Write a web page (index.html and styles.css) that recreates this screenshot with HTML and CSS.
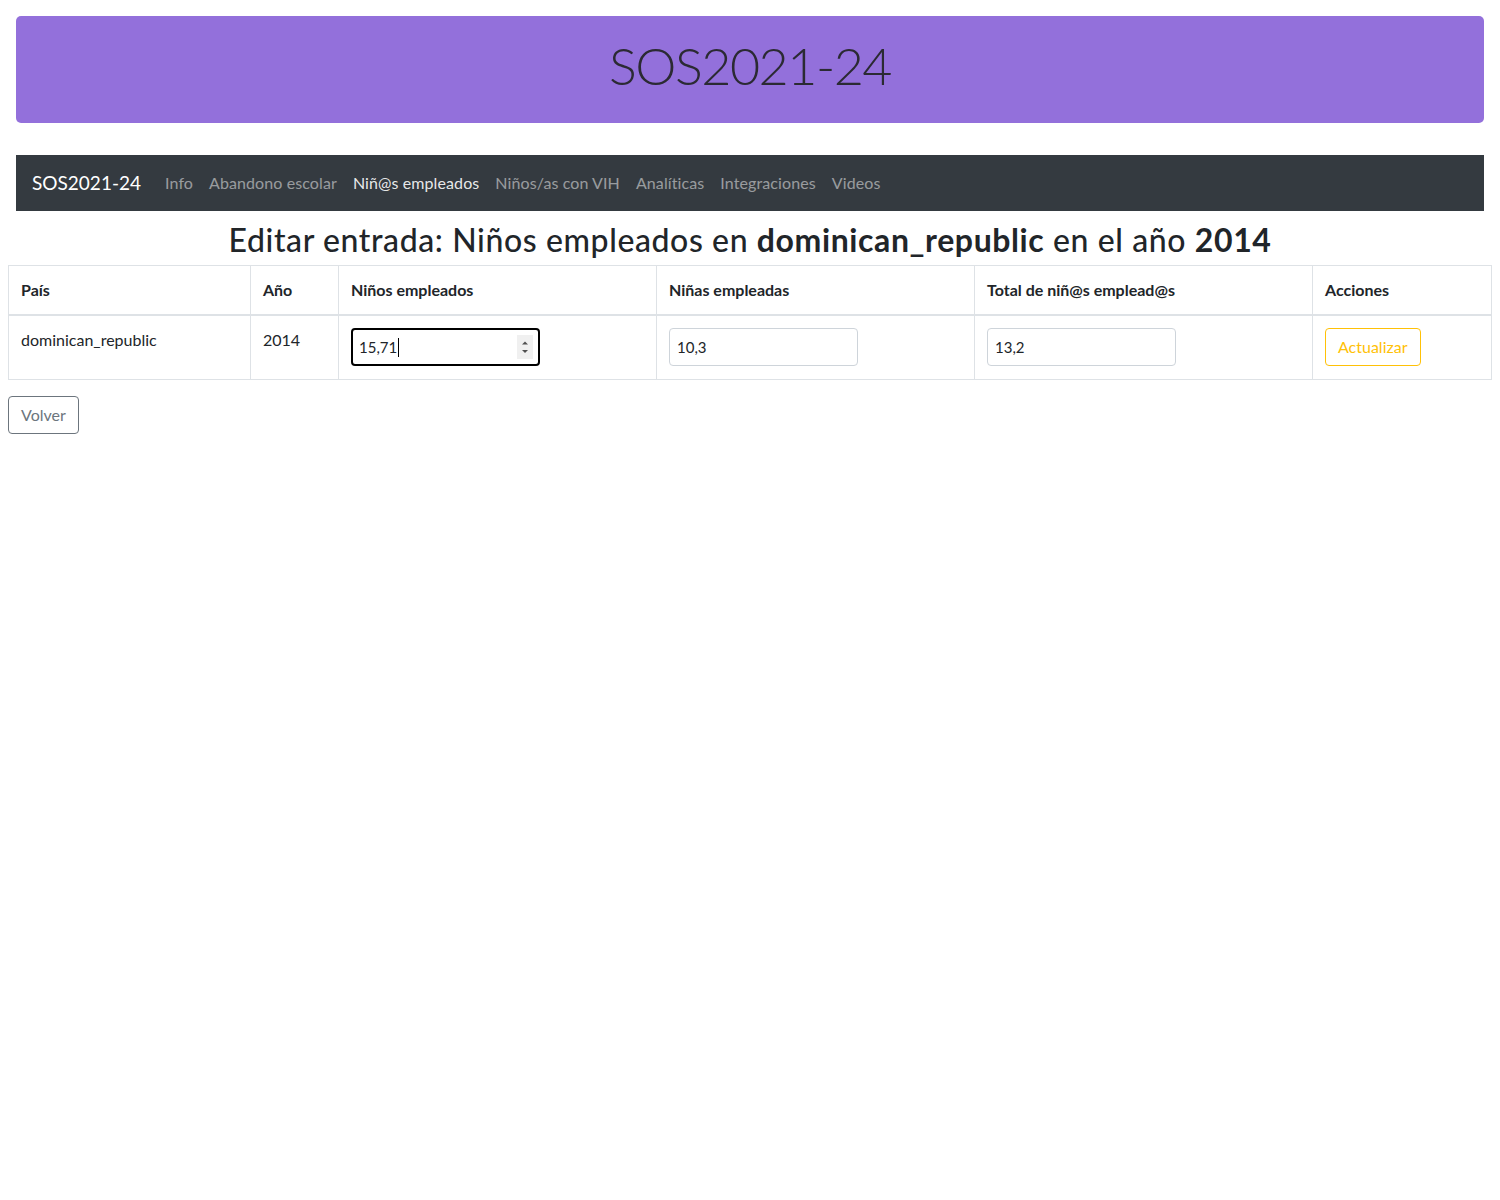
FILE: index.html
```html
<!DOCTYPE html>
<html lang="es">
<head>
<meta charset="utf-8">
<title>SOS2021-24</title>
<link rel="stylesheet" href="styles.css">
</head>
<body>
<header class="jumbotron"><h1 class="display">SOS2021-24</h1></header>
<nav class="navbar">
  <span class="brand">SOS2021-24</span>
  <a class="nav-link">Info</a>
  <a class="nav-link">Abandono escolar</a>
  <a class="nav-link active">Niñ@s empleados</a>
  <a class="nav-link">Niños/as con VIH</a>
  <a class="nav-link">Analíticas</a>
  <a class="nav-link">Integraciones</a>
  <a class="nav-link">Videos</a>
</nav>
<h2 class="title">Editar entrada: Niños empleados en <strong>dominican_republic</strong> en el año <strong>2014</strong></h2>
<table class="table">
  <thead>
    <tr>
      <th class="c1">País</th>
      <th class="c2">Año</th>
      <th class="c3">Niños empleados</th>
      <th class="c4">Niñas empleadas</th>
      <th class="c5">Total de niñ@s emplead@s</th>
      <th class="c6">Acciones</th>
    </tr>
  </thead>
  <tbody>
    <tr>
      <td>dominican_republic</td>
      <td>2014</td>
      <td><div class="form-control focused"><span>15,71</span><span class="caret"></span><span class="spin"><svg width="16" height="24" viewBox="0 0 16 24"><path d="M8 6.5 L11 9.5 L5 9.5 Z" fill="#505050"/><path d="M8 18 L11 15 L5 15 Z" fill="#505050"/></svg></span></div></td>
      <td><div class="form-control">10,3</div></td>
      <td><div class="form-control">13,2</div></td>
      <td><button class="btn btn-warning-outline">Actualizar</button></td>
    </tr>
  </tbody>
</table>
<button class="btn btn-secondary-outline">Volver</button>
</body>
</html>
```
FILE: styles.css
```css
body {
  margin: 8px;
  font-family: "Lato", "Noto Sans", sans-serif;
  font-size: 16px;
  line-height: 1.5;
  color: #212529;
  background: #fff;
}
.jumbotron {
  margin: 8px 8px 32px;
  height: 107px;
  background: #9370db;
  border-radius: 5px;
  display: flex;
  align-items: center;
  justify-content: center;
}
.display {
  margin: -8px 0 0;
  font-size: 52px;
  font-weight: 300;
  line-height: 1.2;
  color: #2b2a33;
  letter-spacing: -1.5px;
}
.navbar {
  margin: 0 8px;
  height: 56px;
  background: #343a40;
  display: flex;
  align-items: center;
  padding: 0 16px;
  box-sizing: border-box;
}
.brand {
  color: #fff;
  font-size: 19px;
  margin-right: 16px;
}
.nav-link {
  color: rgba(255,255,255,.5);
  padding: 0 8px;
  font-size: 16px;
  letter-spacing: 0.1px;
}
.nav-link.active { color: rgba(255,255,255,.9); }
.title {
  margin: 10px 0 6px;
  text-align: center;
  font-size: 32px;
  font-weight: 500;
  line-height: 1.2;
  letter-spacing: 0.6px;
}
.title strong { font-weight: 700; }
.table {
  width: 100%;
  border-collapse: collapse;
  margin-bottom: 16px;
}
.table th, .table td {
  border: 1px solid #dee2e6;
  padding: 12px;
  text-align: left;
  vertical-align: top;
}
.table td { padding-bottom: 13px; }
.table th { font-weight: 700; border-bottom: 2px solid #dee2e6; }
.c1 { width: 217px; }
.c2 { width: 63px; }
.c3 { width: 293px; }
.c4 { width: 293px; }
.c5 { width: 313px; }
.form-control {
  width: 189px;
  height: 38px;
  box-sizing: border-box;
  border: 1px solid #ced4da;
  border-radius: 4px;
  padding: 6px 7px;
  font-size: 15px;
  display: flex;
  align-items: center;
  color: #212529;
}
.form-control.focused {
  border: 2px solid #000;
  padding: 6px 6px;
  position: relative;
}
.caret {
  display: inline-block;
  width: 1px;
  height: 19px;
  background: #000;
  margin-left: 1px;
}
.spin {
  position: absolute;
  right: 5px;
  top: 5px;
  width: 16px;
  height: 24px;
  background: #f0f0f0;
  display: flex;
}
.btn {
  font-family: inherit;
  font-size: 16px;
  line-height: 1.5;
  padding: 6px 12px;
  background: transparent;
  border-radius: 4px;
  cursor: pointer;
}
.btn-warning-outline { color: #ffc107; border: 1px solid #ffc107; }
.btn-secondary-outline { color: #6c757d; border: 1px solid #6c757d; }
```
